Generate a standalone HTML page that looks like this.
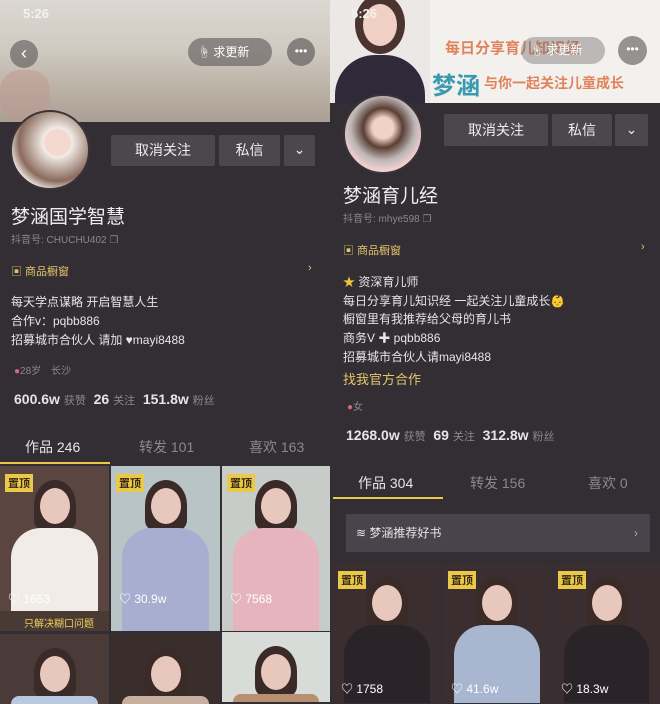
<!DOCTYPE html><html><head><meta charset="utf-8"><style>
*{margin:0;padding:0;box-sizing:border-box}
body{width:660px;height:701px;overflow:hidden;background:#332e34;font-family:"Liberation Sans","Noto Sans CJK SC",sans-serif;color:#e8e4e6;position:relative}
.a{position:absolute;white-space:nowrap}
.btn{position:absolute;background:#4c474c;color:#eee;font-size:14px;text-align:center;border-radius:2px}
.g{color:#8d878c}
.tile{position:absolute;overflow:hidden}
.top{position:absolute;left:5px;top:8px;background:#e9c94a;color:#3a2a10;font-size:11px;padding:1px 3px;font-weight:bold}
.lk{position:absolute;left:8px;bottom:6px;font-size:12px;color:#fff}
.face{position:absolute;width:30px;height:36px;border-radius:50%;background:#e8c8bc;left:50%;margin-left:-15px;top:22px}
.hair{position:absolute;width:42px;height:50px;border-radius:50% 50% 20% 20%;background:#3a2a28;left:50%;margin-left:-21px;top:14px}
.body{position:absolute;width:80%;left:10%;top:62px;bottom:0;border-radius:30px 30px 0 0}
</style></head><body>
<!-- LEFT -->
<div class="a" style="left:0;top:0;width:330px;height:122px;background:linear-gradient(180deg,#dcd8d2 0%,#d0cac2 40%,#bdb4a8 70%,#aa9f94 100%)"></div>
<div class="a" style="left:0;top:70px;width:50px;height:50px;background:#c09890;opacity:.5;border-radius:40%"></div>
<div class="a" style="left:23px;top:6px;font-size:13px;color:#f4f2ee;font-weight:bold">5:26</div>
<div class="a" style="left:10px;top:40px;width:28px;height:28px;border-radius:50%;background:rgba(90,85,85,.6);color:#fff;font-size:18px;text-align:center;line-height:26px">‹</div>
<div class="a" style="left:188px;top:38px;width:84px;height:28px;border-radius:14px;background:rgba(100,95,95,.65);color:#fff;font-size:12px;line-height:28px;padding-left:10px">☝ 求更新</div>
<div class="a" style="left:287px;top:38px;width:28px;height:28px;border-radius:50%;background:rgba(100,95,95,.7);color:#fff;font-size:12px;text-align:center;line-height:26px">•••</div>
<div class="a" style="left:10px;top:110px;width:80px;height:80px;border-radius:50%;background:radial-gradient(circle at 60% 40%,#f3d9cf 0 20%,#f2ede9 22%,#8a6a5c 60%,#e8e2de 75%);border:2px solid #3a3438"></div>
<div class="btn" style="left:111px;top:135px;width:104px;height:31px;line-height:31px">取消关注</div>
<div class="btn" style="left:219px;top:135px;width:61px;height:31px;line-height:31px">私信</div>
<div class="btn" style="left:284px;top:135px;width:31px;height:31px;line-height:29px">⌄</div>
<div class="a" style="left:11px;top:202px;font-size:19px;color:#f0ecee">梦涵国学智慧</div>
<div class="a g" style="left:11px;top:231px;font-size:10px">抖音号: CHUCHU402 ❐</div>
<div class="a" style="left:11px;top:263px;font-size:11px;color:#e4c66a">▣ 商品橱窗</div>
<div class="a" style="left:308px;top:262px;font-size:11px;color:#e4c66a">›</div>
<div class="a" style="left:11px;top:293px;font-size:12px;line-height:19px">每天学点谋略 开启智慧人生<br>合作v：pqbb886<br>招募城市合伙人 请加 ♥mayi8488</div>
<div class="a g" style="left:14px;top:362px;font-size:10px"><span style="color:#d26a7a">●</span>28岁　长沙</div>
<div class="a" style="left:14px;top:391px;font-size:14px;font-weight:bold">600.6w <span class="g" style="font-size:11px;font-weight:normal">获赞</span>&nbsp; 26 <span class="g" style="font-size:11px;font-weight:normal">关注</span>&nbsp; 151.8w <span class="g" style="font-size:11px;font-weight:normal">粉丝</span></div>
<div class="a" style="left:25px;top:437px;font-size:14px">作品 246</div>
<div class="a g" style="left:139px;top:437px;font-size:14px">转发 101</div>
<div class="a g" style="left:249px;top:437px;font-size:14px">喜欢 163</div>
<div class="a" style="left:0;top:462px;width:110px;height:2px;background:#e9c94a"></div>
<div class="tile" style="left:0;top:466px;width:109px;height:165px;background:#5a4540"><div class="hair"></div><div class="face"></div><div class="body" style="background:#f1ece8"></div><div class="top">置顶</div><div class="lk" style="bottom:24px">♡ 1653</div><div class="a" style="left:0;bottom:0;width:109px;height:20px;background:#4a3a34"></div></div>
<div class="a" style="left:24px;top:615px;font-size:10px;color:#f0d060">只解决糊口问题</div>
<div class="tile" style="left:111px;top:466px;width:109px;height:165px;background:#b8c4c6"><div class="hair"></div><div class="face"></div><div class="body" style="background:#a8aed0"></div><div class="top">置顶</div><div class="lk" style="bottom:24px">♡ 30.9w</div></div>
<div class="tile" style="left:222px;top:466px;width:108px;height:165px;background:#c8ccc8"><div class="hair"></div><div class="face"></div><div class="body" style="background:#e6b4bc"></div><div class="top">置顶</div><div class="lk" style="bottom:24px">♡ 7568</div></div>
<div class="tile" style="left:0;top:634px;width:109px;height:70px;background:#4a3a38"><div class="hair"></div><div class="face"></div><div class="body" style="background:#b8c8e0"></div></div>
<div class="tile" style="left:111px;top:634px;width:109px;height:70px;background:#3a2e2c"><div class="hair"></div><div class="face"></div><div class="body" style="background:#c8b0a0"></div></div>
<div class="tile" style="left:222px;top:632px;width:108px;height:70px;background:#d8dcd8"><div class="hair"></div><div class="face"></div><div class="body" style="background:#b89070"></div></div>
<!-- RIGHT -->
<div class="a" style="left:330px;top:0;width:330px;height:103px;background:#f3f1ee"></div>
<div class="tile" style="left:330px;top:0;width:100px;height:103px;background:#ece8e6"><div class="a" style="left:25px;top:-6px;width:50px;height:60px;border-radius:50%;background:#4a3430"></div><div class="a" style="left:33px;top:4px;width:34px;height:42px;border-radius:50%;background:#f0cfc4"></div><div class="a" style="left:5px;top:55px;width:90px;height:60px;border-radius:40px 40px 0 0;background:#2e2a3a"></div></div>
<div class="a" style="left:445px;top:37px;font-size:15px;font-weight:bold;color:#e0825a">每日分享育儿知识经</div>
<div class="a" style="left:432px;top:66px;font-size:24px;font-weight:bold;color:#3a9ab0">梦涵</div>
<div class="a" style="left:484px;top:73px;font-size:14px;font-weight:bold;color:#e0825a">与你一起关注儿童成长</div>
<div class="a" style="left:351px;top:6px;font-size:13px;color:#f4f2ee;font-weight:bold">5:26</div>
<div class="a" style="left:521px;top:37px;width:84px;height:27px;border-radius:14px;background:rgba(120,115,115,.45);color:#fff;font-size:12px;line-height:27px;padding-left:10px">☝ 求更新</div>
<div class="a" style="left:618px;top:36px;width:29px;height:29px;border-radius:50%;background:rgba(110,105,105,.7);color:#fff;font-size:12px;text-align:center;line-height:27px">•••</div>
<div class="a" style="left:343px;top:94px;width:80px;height:80px;border-radius:50%;background:radial-gradient(circle at 50% 42%,#f1d2c6 0 18%,#5a3e34 34%,#bdb6b4 55%,#f0cfd0 72%);border:2px solid #3a3438"></div>
<div class="btn" style="left:444px;top:114px;width:104px;height:32px;line-height:32px">取消关注</div>
<div class="btn" style="left:552px;top:114px;width:60px;height:32px;line-height:32px">私信</div>
<div class="btn" style="left:615px;top:114px;width:33px;height:32px;line-height:30px">⌄</div>
<div class="a" style="left:343px;top:181px;font-size:19px;color:#f0ecee">梦涵育儿经</div>
<div class="a g" style="left:343px;top:210px;font-size:10px">抖音号: mhye598 ❐</div>
<div class="a" style="left:343px;top:242px;font-size:11px;color:#e4c66a">▣ 商品橱窗</div>
<div class="a" style="left:641px;top:241px;font-size:11px;color:#e4c66a">›</div>
<div class="a" style="left:343px;top:273px;font-size:12px;line-height:18.7px"><span style="color:#f2c33a">★</span> 资深育儿师<br>每日分享育儿知识经 一起关注儿童成长👶<br>橱窗里有我推荐给父母的育儿书<br>商务V ✚ pqbb886<br>招募城市合伙人请mayi8488</div>
<div class="a" style="left:343px;top:369px;font-size:13px;color:#e4c66a">找我官方合作</div>
<div class="a g" style="left:347px;top:398px;font-size:10px"><span style="color:#d26a7a">●</span>女</div>
<div class="a" style="left:346px;top:427px;font-size:14px;font-weight:bold">1268.0w <span class="g" style="font-size:11px;font-weight:normal">获赞</span>&nbsp; 69 <span class="g" style="font-size:11px;font-weight:normal">关注</span>&nbsp; 312.8w <span class="g" style="font-size:11px;font-weight:normal">粉丝</span></div>
<div class="a" style="left:358px;top:473px;font-size:14px">作品 304</div>
<div class="a g" style="left:470px;top:473px;font-size:14px">转发 156</div>
<div class="a g" style="left:588px;top:473px;font-size:14px">喜欢 0</div>
<div class="a" style="left:333px;top:497px;width:110px;height:2px;background:#e9c94a"></div>
<div class="a" style="left:346px;top:514px;width:304px;height:38px;background:#49444b;font-size:12px;line-height:38px;padding-left:10px">≋ 梦涵推荐好书<span style="position:absolute;right:12px;color:#aaa">›</span></div>
<div class="tile" style="left:333px;top:563px;width:108px;height:140px;background:#3a2e30"><div class="hair"></div><div class="face"></div><div class="body" style="background:#2a2428"></div><div class="top">置顶</div><div class="lk">♡ 1758</div></div>
<div class="tile" style="left:443px;top:563px;width:108px;height:140px;background:#3a2e30"><div class="hair"></div><div class="face"></div><div class="body" style="background:#a8b6d0"></div><div class="top">置顶</div><div class="lk">♡ 41.6w</div></div>
<div class="tile" style="left:553px;top:563px;width:107px;height:140px;background:#3a2e30"><div class="hair"></div><div class="face"></div><div class="body" style="background:#2a2428"></div><div class="top">置顶</div><div class="lk">♡ 18.3w</div></div>
</body></html>
